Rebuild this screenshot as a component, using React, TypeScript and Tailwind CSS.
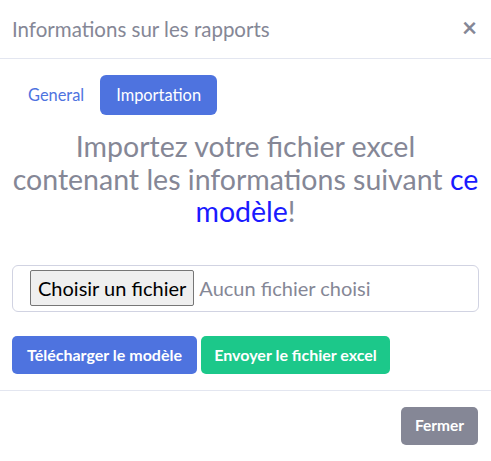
import React, { useState } from 'react';

const App: React.FC = () => {
    const [tab, setTab] = useState<'general' | 'import'>('import');

    return (
        <div className="w-[491px] h-[461px] bg-white text-[#858796]" style={{ fontFamily: 'Lato, "Noto Sans", sans-serif' }}>
            <div className="flex items-center justify-between h-[59px] pl-3 pr-[14px] border-b border-[#e3e6f0]">
                <h5 className="text-[20.5px] leading-none pt-[1px]">Informations sur les rapports</h5>
                <button type="button" className="text-[26px] leading-none text-[#858796] font-bold pb-1">×</button>
            </div>

            <div className="px-3 pt-4">
                <div className="flex items-center">
                    <button
                        type="button"
                        onClick={() => setTab('general')}
                        className={`h-10 px-4 rounded-[6px] text-[16.4px] ${tab === 'general' ? 'bg-[#4e73df] text-white' : 'text-[#4e73df]'}`}
                    >
                        General
                    </button>
                    <button
                        type="button"
                        onClick={() => setTab('import')}
                        className={`h-10 px-4 rounded-[6px] text-[16.4px] ${tab === 'import' ? 'bg-[#4e73df] text-white' : 'text-[#4e73df]'}`}
                    >
                        Importation
                    </button>
                </div>

                <h3 className="mt-[15px] text-center text-[28.5px] leading-[32.5px] text-[#858796] whitespace-nowrap">
                    Importez votre fichier excel
                    <br />
                    contenant les informations suivant <a href="#" className="text-[#1a1aff]">ce</a>
                    <br />
                    <a href="#" className="text-[#1a1aff]">modèle</a>!
                </h3>

                <div className="mt-[37px] h-[47px] flex items-center pl-[17px] border border-[#d1d3e2] rounded-[6px]">
                    <span className="h-9 px-[7px] flex items-center bg-[#efefef] border border-[#767676] rounded-[2px] text-[20px] text-black">
                        Choisir un fichier
                    </span>
                    <span className="ml-[5px] text-[20px] text-[#858796]">Aucun fichier choisi</span>
                </div>

                <div className="mt-[24px] flex gap-1">
                    <button type="button" className="h-[38px] w-[185px] rounded-[5px] bg-[#4e73df] text-white text-[16px] font-bold">
                        Télécharger le modèle
                    </button>
                    <button type="button" className="h-[38px] w-[189px] rounded-[5px] bg-[#1cc88a] text-white text-[16px] font-bold">
                        Envoyer le fichier excel
                    </button>
                </div>
            </div>

            <div className="mt-[16px] border-t border-[#e3e6f0] flex justify-end pt-4 pr-[13px]">
                <button type="button" className="h-[38px] w-[77px] rounded-[5px] bg-[#858796] text-white text-[15.5px] font-bold">
                    Fermer
                </button>
            </div>
        </div>
    );
};

export default App;
